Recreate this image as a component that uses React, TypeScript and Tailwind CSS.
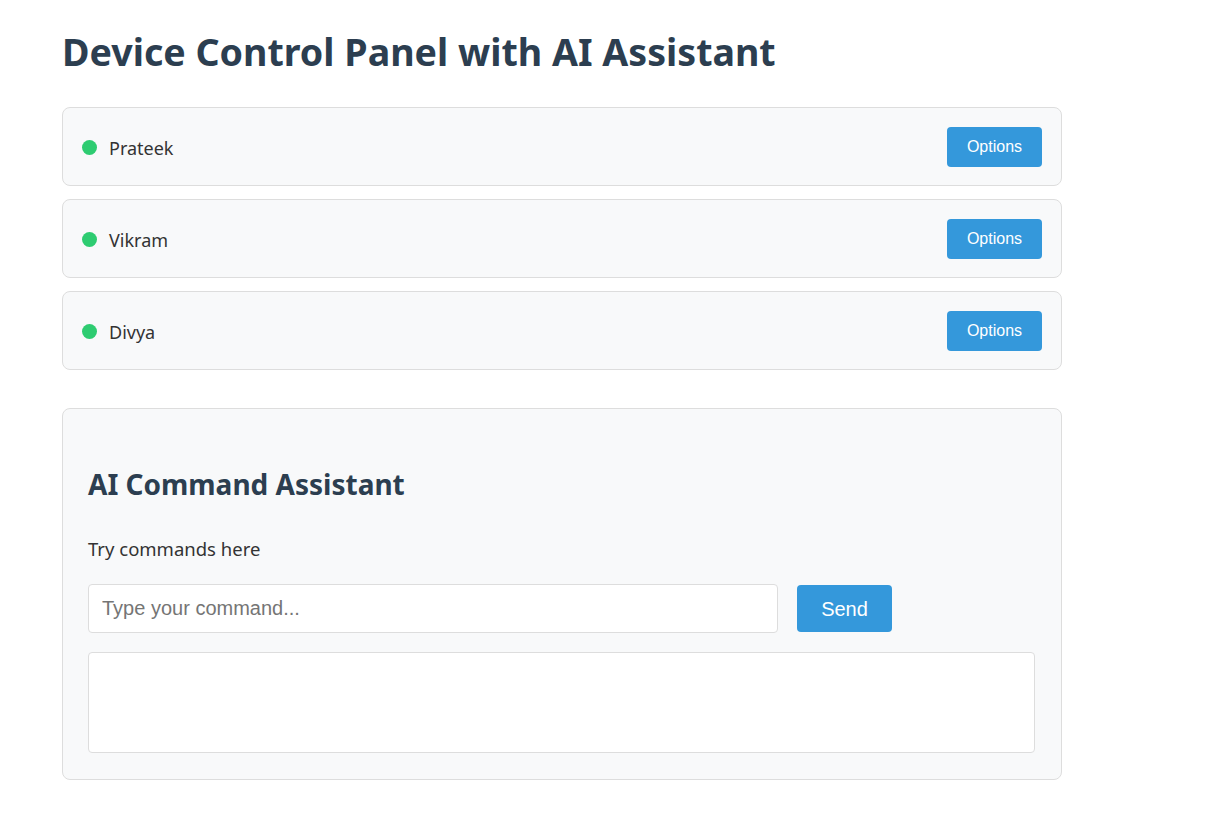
const devices = ["Prateek", "Vikram", "Divya"];

const App = () => {
    return (
        <div className="min-h-screen bg-white px-[62px] pt-[24px] font-['Noto_Sans',sans-serif] text-[#333]">
            <h1 className="text-[37.6px] leading-[56px] font-bold text-[#2c3e50]">Device Control Panel with AI Assistant</h1>
            <div className="w-[1000px] mt-[27px] flex flex-col gap-[13px]">
                {devices.map((name) => (
                    <div
                        key={name}
                        className="h-[79px] flex items-center justify-between px-[19px] bg-[#f8f9fa] border border-[#ddd] rounded-[8px]"
                    >
                        <div className="flex items-center gap-[12px]">
                            <span className="w-[15px] h-[15px] mt-[2px] rounded-full bg-[#2ecc71]" />
                            <span className="mt-[3px] text-[18px]">{name}</span>
                        </div>
                        <button className="w-[95px] h-[40px] bg-[#3498db] text-white rounded-[4px] text-[16px] font-['Liberation_Sans',sans-serif]">
                            Options
                        </button>
                    </div>
                ))}
            </div>
            <div className="w-[1000px] mt-[38px] pl-[25px] pr-[26px] pt-[55px] pb-[26px] bg-[#f8f9fa] border border-[#ddd] rounded-[8px]">
                <h2 className="text-[28px] leading-[40px] font-bold text-[#2c3e50]">AI Command Assistant</h2>
                <p className="mt-[31px] text-[18.5px] leading-[28px]">Try commands here</p>
                <div className="mt-[21px] flex items-center gap-[19px]">
                    <input
                        type="text"
                        placeholder="Type your command..."
                        className="w-[690px] h-[49px] px-[13px] bg-white border border-[#ddd] rounded-[4px] text-[20px] font-['Liberation_Sans',sans-serif] placeholder:text-[#757575] outline-none"
                    />
                    <button className="w-[95px] h-[47px] bg-[#3498db] text-white rounded-[4px] text-[20px] font-['Liberation_Sans',sans-serif]">
                        Send
                    </button>
                </div>
                <div className="mt-[19px] h-[101px] bg-white border border-[#ddd] rounded-[4px]" />
            </div>
        </div>
    );
};

export default App;
